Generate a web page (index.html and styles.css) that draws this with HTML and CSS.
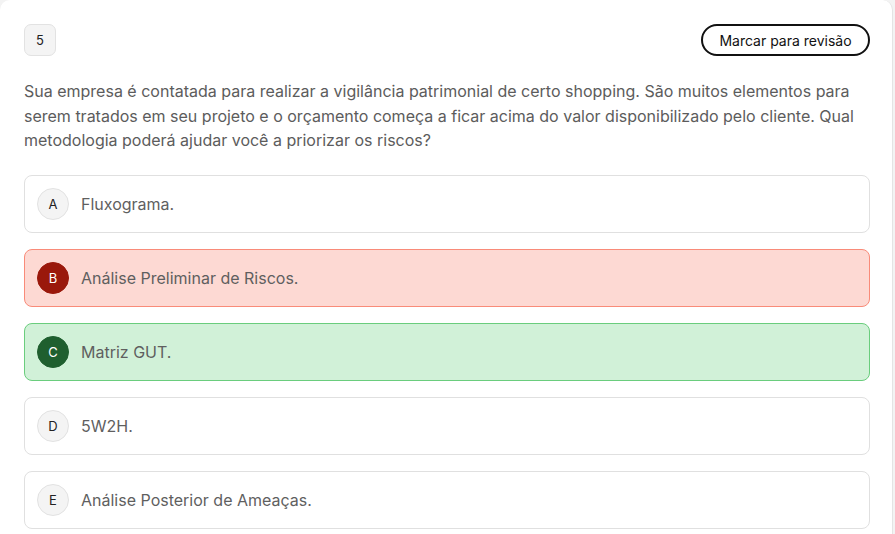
FILE: index.html
```html
<!DOCTYPE html>
<html lang="pt-BR">
<head>
<meta charset="utf-8">
<link rel="stylesheet" href="styles.css">
</head>
<body>
<div class="card">
  <div class="head">
    <span class="num">5</span>
    <button class="review">Marcar para revisão</button>
  </div>
  <p class="question">Sua empresa é contatada para realizar a vigilância patrimonial de certo shopping. São muitos elementos para serem tratados em seu projeto e o orçamento começa a ficar acima do valor disponibilizado pelo cliente. Qual metodologia poderá ajudar você a priorizar os riscos?</p>
  <div class="options">
    <div class="opt"><span class="letter">A</span><span class="txt">Fluxograma.</span></div>
    <div class="opt wrong"><span class="letter">B</span><span class="txt">Análise Preliminar de Riscos.</span></div>
    <div class="opt right"><span class="letter">C</span><span class="txt">Matriz GUT.</span></div>
    <div class="opt"><span class="letter">D</span><span class="txt">5W2H.</span></div>
    <div class="opt"><span class="letter">E</span><span class="txt">Análise Posterior de Ameaças.</span></div>
  </div>
</div>
</body>
</html>
```
FILE: styles.css
```css
html, body { margin: 0; padding: 0; }
body {
  background: #f3f3f3;
  font-family: Inter, "Noto Sans", sans-serif;
  width: 895px;
  height: 534px;
  overflow: hidden;
}
.card {
  box-sizing: border-box;
  width: 893px;
  min-height: 560px;
  background: #fff;
  border-right: 1px solid #e4e4e4;
  border-radius: 10px;
  padding: 24px 0 24px 24px;
}
.head {
  display: flex;
  justify-content: space-between;
  align-items: center;
  height: 32px;
  width: 846px;
}
.num {
  box-sizing: border-box;
  width: 32px;
  height: 32px;
  border: 1px solid #e2e2e2;
  background: #f4f4f4;
  border-radius: 7px;
  display: flex;
  align-items: center;
  justify-content: center;
  font-size: 13px;
  color: #222;
}
.review {
  box-sizing: border-box;
  height: 32px;
  width: 169px;
  border: 2px solid #111;
  border-radius: 16px;
  background: #fff;
  font-family: Inter, "Noto Sans", sans-serif;
  font-size: 14px;
  color: #111;
  padding: 0;
}
.question {
  margin: 23px 0 0 0;
  font-size: 16px;
  line-height: 24.5px;
  color: #5c5c5c;
  width: 846px;
}
.options {
  display: flex;
  flex-direction: column;
  gap: 16px;
  margin-top: 22px;
  width: 846px;
}
.opt {
  box-sizing: border-box;
  height: 58px;
  border: 1px solid #e0e0e0;
  border-radius: 8px;
  display: flex;
  align-items: center;
  padding-left: 12px;
  gap: 12px;
  background: #fff;
}
.letter {
  box-sizing: border-box;
  width: 32px;
  height: 32px;
  border-radius: 50%;
  border: 1px solid #e2e2e2;
  background: #f4f4f4;
  display: flex;
  align-items: center;
  justify-content: center;
  font-size: 13px;
  color: #222;
}
.txt {
  font-size: 16px;
  color: #5f5f5f;
}
.wrong { background: #fdd9d3; border-color: #f98b79; }
.wrong .letter { background: #9a180b; border-color: #9a180b; color: #fff; }
.right { background: #d1f1d8; border-color: #6acd7d; }
.right .letter { background: #1f5f2f; border-color: #1f5f2f; color: #fff; }
```
